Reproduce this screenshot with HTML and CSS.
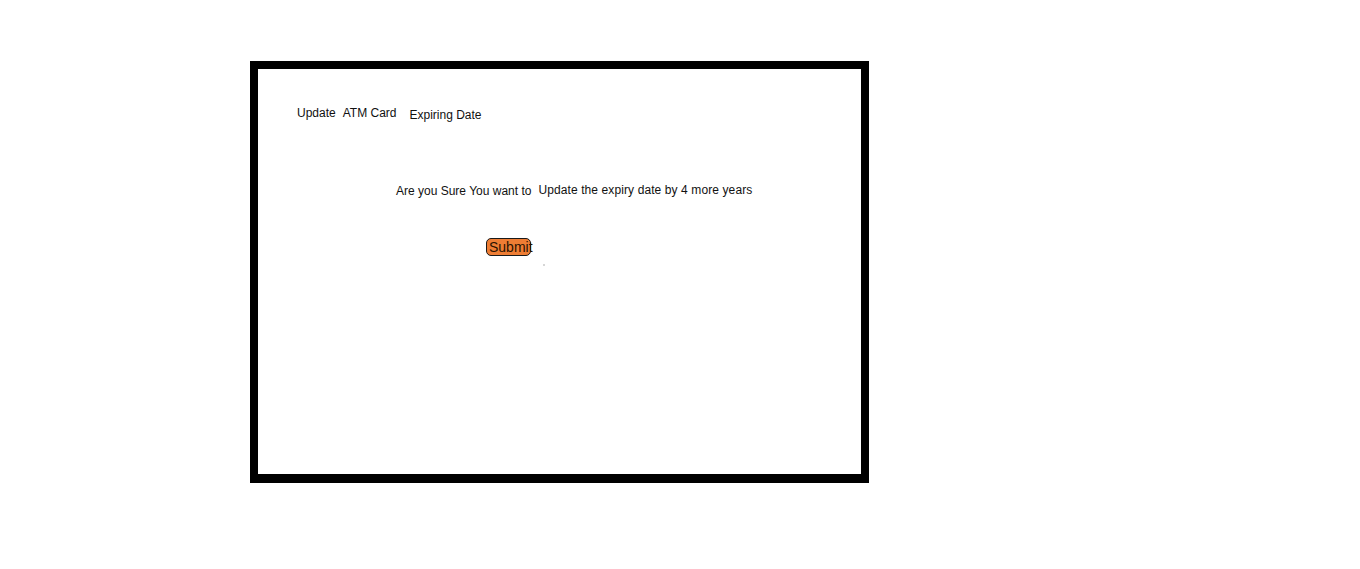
FILE: index.html
```html
<!DOCTYPE html>
<html>
<head>
<meta charset="utf-8">
<link rel="stylesheet" href="styles.css">
</head>
<body>
<div class="frame">
  <div class="title">
    <span class="t1">Update</span>
    <span class="t2">ATM Card</span>
    <span class="t3">Expiring Date</span>
  </div>
  <div class="question">
    <span class="q1">Are you Sure You want to</span>
    <span class="q2">Update the expiry date by 4 more years</span>
  </div>
  <div class="actions">
    <button class="submit">Submit</button>
    <span class="dot"></span>
  </div>
</div>
</body>
</html>
```
FILE: styles.css
```css
html, body {
  margin: 0;
  padding: 0;
  background: #ffffff;
}
body {
  font-family: "Liberation Sans", Arial, sans-serif;
  font-size: 12px;
  color: #111;
}
.frame {
  box-sizing: border-box;
  margin: 61px 0 0 250px;
  width: 619px;
  height: 422px;
  border: 8px solid #000;
  border-bottom-width: 9px;
  padding: 0 0 0 39px;
}
.title {
  display: flex;
  align-items: flex-start;
  padding-top: 37px;
  height: 20px;
}
.title span {
  line-height: 14px;
}
.t2 { margin-left: 7px; }
.t3 { margin-left: 13px; margin-top: 2px; }
.question {
  display: flex;
  margin-top: 57px;
  padding-left: 99px;
  height: 20px;
}
.q1 { margin-top: 1px; }
.q2 { margin-left: 7px; }
.q2 { letter-spacing: 0.1px; }
.actions {
  display: flex;
  align-items: flex-start;
  margin-top: 35px;
  padding-left: 189px;
}
.submit {
  box-sizing: border-box;
  width: 45px;
  height: 18px;
  padding: 0 0 0 2px;
  margin: 0;
  background: #ee7d34;
  border: 1px solid #1a1a1a;
  border-radius: 5px;
  font-family: "Liberation Sans", Arial, sans-serif;
  font-size: 14px;
  line-height: 16px;
  color: #2b1200;
  text-align: left;
  white-space: nowrap;
  overflow: visible;
}
.dot {
  width: 2px;
  height: 2px;
  background: #d6d6d6;
  margin: 26px 0 0 12px;
}
```
